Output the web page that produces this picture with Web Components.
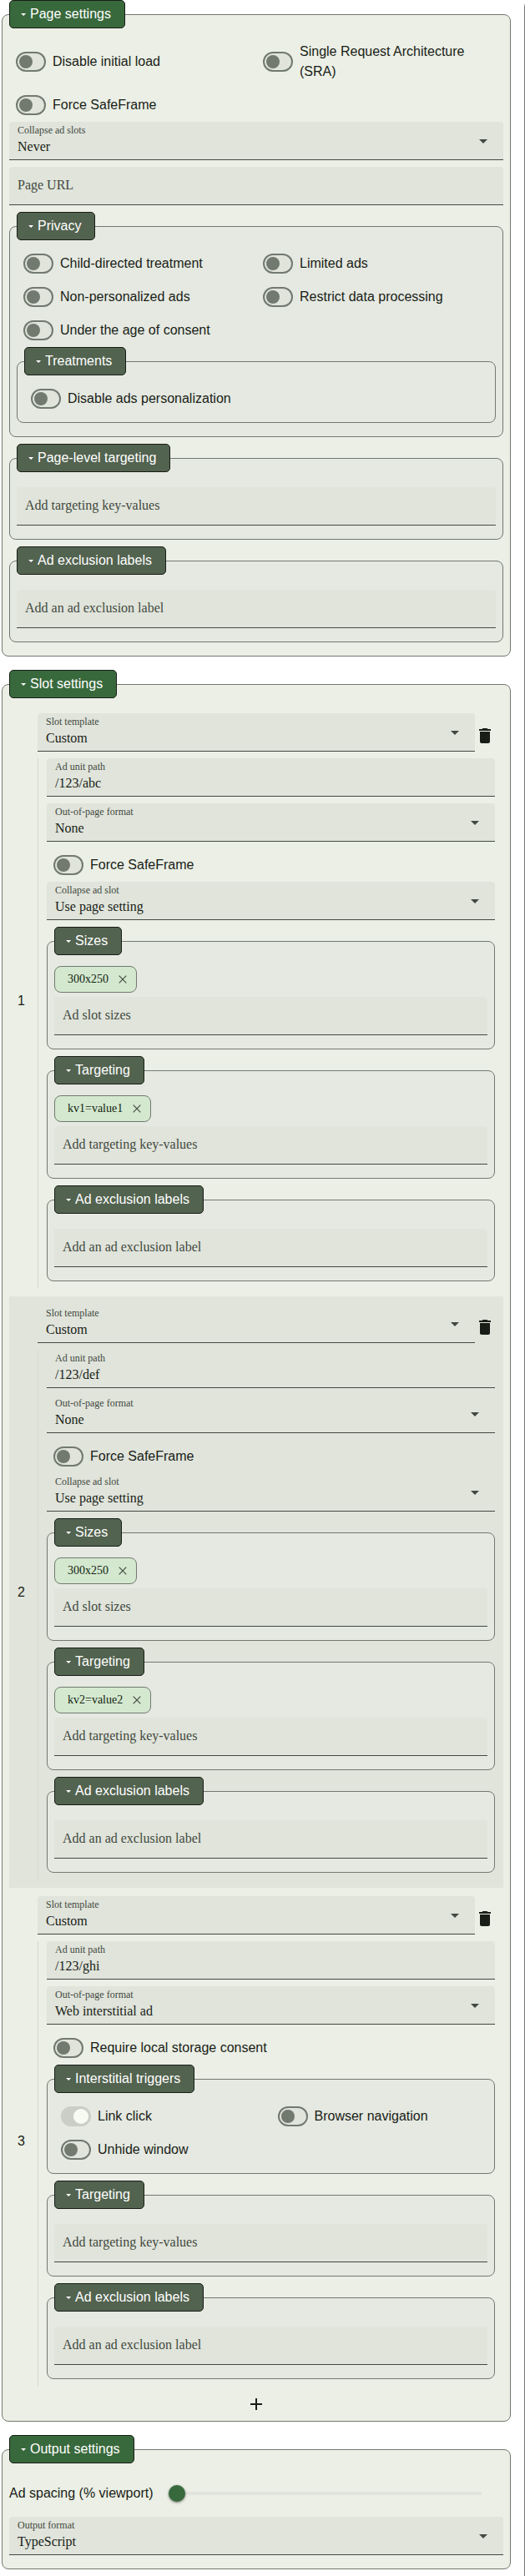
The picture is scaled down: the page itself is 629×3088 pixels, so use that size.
<!DOCTYPE html>
<html lang="en">
<head>
<meta charset="utf-8">
<title>Ad configuration</title>
<style>
  html, body { margin: 0; background: #fff; }
  body {
    font: 16px/24px "Liberation Sans", Arial, sans-serif;
    color: #191d17;
    --primary: #38693c;
    --secondary: #52634f;
    --outline: #72796f;
    --surface: #ebefe5;
    --surface-high: #e5e9e1;
    --surface-highest: #e0e4db;
    --on-surface: #191d17;
    --on-surface-variant: #424940;
    --serif: "Liberation Serif", "Times New Roman", serif;
  }
</style>
</head>
<body>
<config-app></config-app>

<template id="t-group">
  <style>
    :host { display: block; margin-bottom: 8px; }
    .wrap { display: grid; grid-template-rows: 17px 17px auto; grid-template-columns: 9px max-content 1fr; }
    .frame {
      grid-row: 2 / 4; grid-column: 1 / 4;
      border: 1px solid var(--outline); border-radius: 8px;
      background: var(--surface-high);
    }
    .legend {
      grid-row: 1 / 3; grid-column: 2; z-index: 1; box-sizing: border-box; height: 34px;
      display: flex; align-items: center; padding: 0 16px 0 8px;
      border: 1px solid #191d17; border-radius: 5px;
      background: var(--secondary); color: #fff; line-height: 18px; white-space: nowrap;
    }
    svg { width: 16px; height: 16px; display: block; }
    .content { grid-row: 3; grid-column: 1 / 4; z-index: 1; padding: 8px 9px 9px; min-width: 0; }
    :host([top]) { margin-bottom: 16px; }
    :host([top]) .frame { background: var(--surface); }
    :host([top]) .legend { background: var(--primary); }
  </style>
  <div class="wrap">
    <div class="frame"></div>
    <div class="legend"><svg viewBox="0 0 16 16"><path d="M5.1 6.9h6L8.1 9.9z" fill="currentColor"/></svg><span></span></div>
    <div class="content"><slot></slot></div>
  </div>
</template>

<template id="t-field">
  <style>
    :host {
      display: flex; box-sizing: border-box; height: 46px; margin-bottom: 8px; padding: 0 19px 0 10px;
      background: var(--surface-highest); border-bottom: 1px solid var(--on-surface-variant);
      border-radius: 4px 4px 0 0; font-family: var(--serif);
    }
    .text { flex: 1; padding-top: 2px; }
    .label { display: block; font-size: 12px; line-height: 16px; color: var(--on-surface-variant); }
    .value { display: block; color: var(--on-surface); line-height: 24px; }
    :host(:not([value])) .text { padding-top: 10px; }
    :host(:not([value])) .label { font-size: 16px; line-height: 24px; }
    :host(:not([value])) .value { display: none; }
    svg { display: none; width: 10px; height: 5px; margin-top: 21px; }
    :host([select]) svg { display: block; }
  </style>
  <div class="text"><span class="label"></span><span class="value"></span></div>
  <svg viewBox="0 0 10 5"><path d="M0 0h10L5 5z" fill="#424940"/></svg>
</template>

<template id="t-switch">
  <style>
    :host { display: flex; align-items: center; padding: 8px; gap: 8px; }
    .track {
      flex: none; box-sizing: border-box; width: 36px; height: 24px; border: 2px solid var(--outline);
      border-radius: 12px; background: var(--surface-highest); display: flex; align-items: center; padding-left: 2px;
    }
    .thumb { width: 16px; height: 16px; border-radius: 50%; background: var(--outline); }
    :host([on]) .track { background: #cacec6; border-color: #cacec6; padding: 0 1px 0 0; justify-content: flex-end; }
    :host([on]) .thumb { width: 18px; height: 18px; background: #f7fbf1; }
  </style>
  <div class="track"><div class="thumb"></div></div>
  <span><slot></slot></span>
</template>

<template id="t-grid">
  <style>
    :host { display: grid; grid-template-columns: 1fr 1fr; }
  </style>
  <slot></slot>
</template>

<template id="t-input">
  <style>
    :host { display: block; padding-top: 10px; }
    :host([chip]) { padding-top: 5px; }
    .chip {
      display: none; box-sizing: border-box; width: max-content; height: 32px; margin-bottom: 5px;
      align-items: center; padding: 0 7px 0 15px; gap: 8px;
      border: 1px solid var(--outline); border-radius: 8px; background: #d4e8cf;
      font: 14px/20px var(--serif); color: #111f0f;
    }
    :host([chip]) .chip { display: flex; }
    svg { width: 18px; height: 18px; }
  </style>
  <div class="chip"><span></span><svg viewBox="0 0 18 18"><path d="M4.7 4.7l8.6 8.6M13.3 4.7l-8.6 8.6" stroke="#424940" stroke-width="1.2"/></svg></div>
  <config-field></config-field>
</template>

<template id="t-row">
  <style>
    :host { display: grid; grid-template-columns: 24px minmax(0, 1fr); align-items: center; padding: 10px; }
    :host([shaded]) { background: var(--surface-highest); }
    .head { display: grid; grid-template-columns: 1fr 24px; align-items: center; }
    .head svg { width: 24px; height: 24px; }
    .body { border-left: 1px solid #d5d9d0; padding-left: 10px; }
    .body { display: flow-root; }
  </style>
  <span class="num"></span>
  <div>
    <div class="head">
      <config-field select label="Slot template" value="Custom"></config-field>
      <svg viewBox="0 0 24 24"><path fill="#191d17" d="M6 19c0 1.1.9 2 2 2h8c1.1 0 2-.9 2-2V7H6v12zM19 4h-3.5l-1-1h-5l-1 1H5v2h14V4z"/></svg>
    </div>
    <div class="body"><slot></slot></div>
  </div>
</template>

<template id="t-slider">
  <style>
    :host { display: flex; align-items: center; height: 48px; padding-bottom: 8px; }
    .track { flex: 1; height: 4px; margin: 0 26px 0 28px; border-radius: 2px; background: var(--surface-highest); display: flex; align-items: center; }
    .handle { flex: none; width: 20px; height: 20px; margin-left: -10px; border-radius: 50%; background: var(--primary); box-shadow: 0 1px 2px rgba(0,0,0,.3), 0 1px 3px 1px rgba(0,0,0,.15); }
    :host { padding-top: 4px; padding-bottom: 4px; }
  </style>
  <span><slot></slot></span>
  <div class="track"><div class="handle"></div></div>
</template>

<template id="t-app">
  <style>
    :host { display: grid; grid-template-columns: 610px 1px; column-gap: 16px; padding-left: 2px; height: 3088px; overflow: hidden; }
    .next { width: 300px; box-sizing: border-box; border: 1px solid var(--outline); border-radius: 8px; }
    .add { display: flex; justify-content: center; height: 24px; }
    .add svg { width: 24px; height: 24px; }
  </style>
  <main>
    <config-group top label="Page settings">
      <switch-grid>
        <config-switch>Disable initial load</config-switch>
        <config-switch>Single Request Architecture (SRA)</config-switch>
        <config-switch>Force SafeFrame</config-switch>
      </switch-grid>
      <config-field select label="Collapse ad slots" value="Never"></config-field>
      <config-field label="Page URL"></config-field>
      <config-group label="Privacy">
        <switch-grid>
          <config-switch>Child-directed treatment</config-switch>
          <config-switch>Limited ads</config-switch>
          <config-switch>Non-personalized ads</config-switch>
          <config-switch>Restrict data processing</config-switch>
          <config-switch>Under the age of consent</config-switch>
        </switch-grid>
        <config-group label="Treatments">
          <switch-grid><config-switch>Disable ads personalization</config-switch></switch-grid>
        </config-group>
      </config-group>
      <config-group label="Page-level targeting"><chip-input label="Add targeting key-values"></chip-input></config-group>
      <config-group label="Ad exclusion labels"><chip-input label="Add an ad exclusion label"></chip-input></config-group>
    </config-group>

    <config-group top label="Slot settings">
      <slot-row number="1">
        <config-field label="Ad unit path" value="/123/abc"></config-field>
        <config-field select label="Out-of-page format" value="None"></config-field>
        <config-switch>Force SafeFrame</config-switch>
        <config-field select label="Collapse ad slot" value="Use page setting"></config-field>
        <config-group label="Sizes"><chip-input chip="300x250" label="Ad slot sizes"></chip-input></config-group>
        <config-group label="Targeting"><chip-input chip="kv1=value1" label="Add targeting key-values"></chip-input></config-group>
        <config-group label="Ad exclusion labels"><chip-input label="Add an ad exclusion label"></chip-input></config-group>
      </slot-row>
      <slot-row number="2" shaded>
        <config-field label="Ad unit path" value="/123/def"></config-field>
        <config-field select label="Out-of-page format" value="None"></config-field>
        <config-switch>Force SafeFrame</config-switch>
        <config-field select label="Collapse ad slot" value="Use page setting"></config-field>
        <config-group label="Sizes"><chip-input chip="300x250" label="Ad slot sizes"></chip-input></config-group>
        <config-group label="Targeting"><chip-input chip="kv2=value2" label="Add targeting key-values"></chip-input></config-group>
        <config-group label="Ad exclusion labels"><chip-input label="Add an ad exclusion label"></chip-input></config-group>
      </slot-row>
      <slot-row number="3">
        <config-field label="Ad unit path" value="/123/ghi"></config-field>
        <config-field select label="Out-of-page format" value="Web interstitial ad"></config-field>
        <config-switch>Require local storage consent</config-switch>
        <config-group label="Interstitial triggers">
          <switch-grid>
            <config-switch on>Link click</config-switch>
            <config-switch>Browser navigation</config-switch>
            <config-switch>Unhide window</config-switch>
          </switch-grid>
        </config-group>
        <config-group label="Targeting"><chip-input label="Add targeting key-values"></chip-input></config-group>
        <config-group label="Ad exclusion labels"><chip-input label="Add an ad exclusion label"></chip-input></config-group>
      </slot-row>
      <div class="add"><svg viewBox="0 0 24 24"><path fill="#191d17" d="M19 13h-6v6h-2v-6H5v-2h6V5h2v6h6z"/></svg></div>
    </config-group>

    <config-group top label="Output settings">
      <config-slider>Ad spacing (% viewport)</config-slider>
      <config-field select label="Output format" value="TypeScript"></config-field>
    </config-group>
  </main>
  <div class="next"></div>
</template>

<script>
  class Base extends HTMLElement {
    constructor() {
      super();
      const template = document.getElementById(this.constructor.template);
      this.attachShadow({ mode: 'open' }).append(template.content.cloneNode(true));
    }
    put(selector, attribute) {
      this.shadowRoot.querySelector(selector).textContent = this.getAttribute(attribute) || '';
    }
  }
  class ConfigGroup extends Base {
    static template = 't-group';
    connectedCallback() { this.put('.legend span', 'label'); }
  }
  class ConfigField extends Base {
    static template = 't-field';
    static observedAttributes = ['label', 'value'];
    attributeChangedCallback(name) { this.put('.' + name, name); }
  }
  class ConfigSwitch extends Base { static template = 't-switch'; }
  class SwitchGrid extends Base { static template = 't-grid'; }
  class ChipInput extends Base {
    static template = 't-input';
    connectedCallback() {
      this.put('.chip span', 'chip');
      this.shadowRoot.querySelector('config-field').setAttribute('label', this.getAttribute('label'));
    }
  }
  class SlotRow extends Base {
    static template = 't-row';
    connectedCallback() { this.put('.num', 'number'); }
  }
  class ConfigSlider extends Base { static template = 't-slider'; }
  class ConfigApp extends Base { static template = 't-app'; }

  customElements.define('config-field', ConfigField);
  customElements.define('config-switch', ConfigSwitch);
  customElements.define('switch-grid', SwitchGrid);
  customElements.define('chip-input', ChipInput);
  customElements.define('config-group', ConfigGroup);
  customElements.define('slot-row', SlotRow);
  customElements.define('config-slider', ConfigSlider);
  customElements.define('config-app', ConfigApp);
</script>
</body>
</html>
